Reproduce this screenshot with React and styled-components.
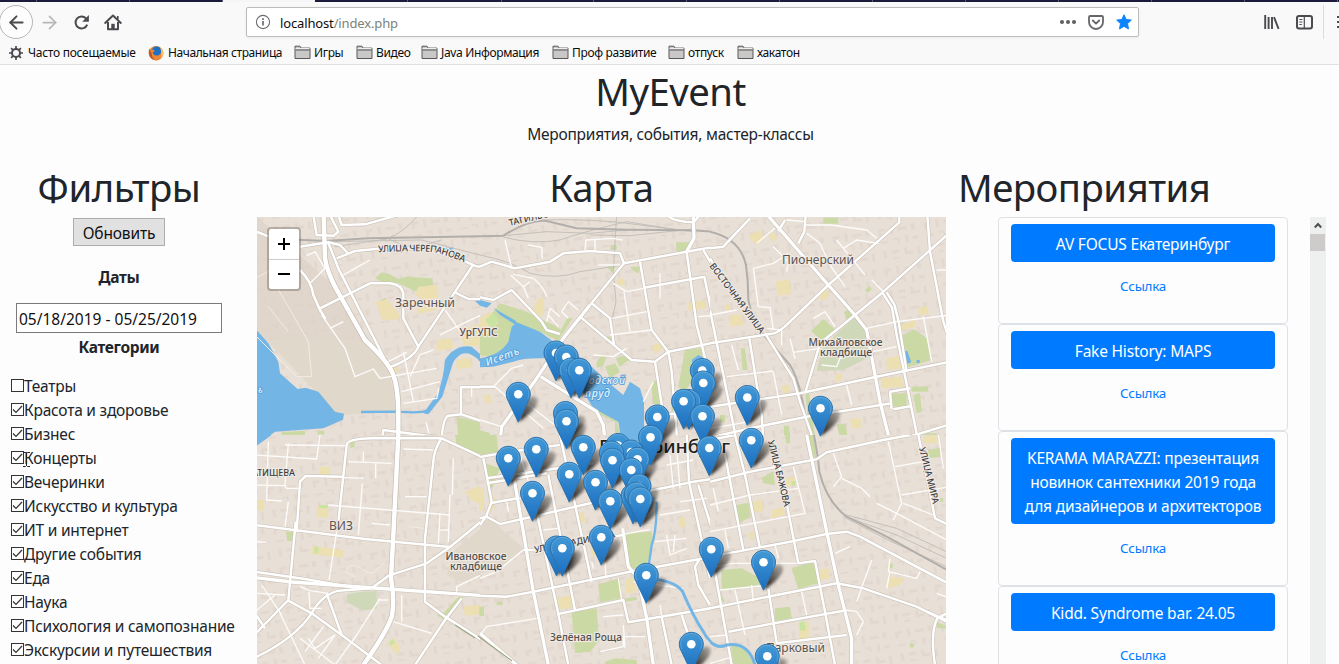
import React from "react";
import styled, { createGlobalStyle } from "styled-components";
import { ArrowLeft, ArrowRight } from "lucide-react";

const GlobalStyle = createGlobalStyle`
  *, *::before, *::after { box-sizing: border-box; }
  html, body { margin: 0; padding: 0; overflow: hidden; }
  body {
    background: #fdfdfe;
    color: #212529;
    font-family: "Noto Sans", "Open Sans", sans-serif;
    font-size: 15.5px;
    line-height: 24px;
    letter-spacing: -0.25px;
  }
  h1, h2, p { margin: 0; font-weight: 400; }
`;

const Screen = styled.div`
  width: 1339px;
  height: 664px;
  overflow: hidden;
  position: relative;
`;

/* ---------- browser chrome ---------- */

const Chrome = styled.header`
  height: 65px;
  background: #f9f9fa;
  border-bottom: 1px solid #e0e0e1;
  color: #0c0c0d;
`;

const TabStrip = styled.div`
  display: flex;
  height: 2px;
  background: #1d1b3c;
`;

const Tab = styled.div`
  flex: none;
  width: ${(p) => p.$w}px;
  background: ${(p) => (p.$active ? "#f5f6f7" : "transparent")};
  border-right: 1px solid ${(p) => (p.$active ? "#f5f6f7" : "#5b5a73")};
`;

const NavBar = styled.div`
  display: flex;
  align-items: center;
  height: 40px;
  color: #4a4a4f;
`;

const BackButton = styled.div`
  display: flex;
  align-items: center;
  justify-content: center;
  flex: none;
  width: 34px;
  height: 34px;
  margin-left: -1px;
  border: 1px solid #b5b5b7;
  border-radius: 50%;
  background: #fdfdfd;
`;

const NavIcon = styled.div`
  display: flex;
  flex: none;
  margin-left: ${(p) => p.$gap || 0}px;
  color: ${(p) => p.$color || "#4a4a4f"};
`;

const UrlBar = styled.div`
  display: flex;
  align-items: center;
  flex: none;
  width: 893px;
  height: 30px;
  margin-left: 124px;
  padding: 0 6px 0 8px;
  background: #fff;
  border: 1px solid #bcbcbd;
  border-radius: 2px;
  box-shadow: 0 1px 3px rgba(0, 0, 0, 0.06);
`;

const UrlText = styled.div`
  flex: 1;
  margin-left: 9px;
  padding-top: 1px;
  font-size: 13px;
  letter-spacing: -0.14px;
  color: #0c0c0d;
  span { color: #7b8378; }
`;

const Divider = styled.div`
  flex: none;
  width: 1px;
  height: 34px;
  margin-left: 10px;
  background: #dcdcdd;
`;

const Bookmarks = styled.nav`
  display: flex;
  align-items: center;
  height: 21px;
  padding-left: 8px;
  font-size: 12px;
  line-height: 20px;
`;

const Bookmark = styled.div`
  display: flex;
  align-items: center;
  flex: none;
  width: ${(p) => p.$w}px;
  gap: ${(p) => p.$gap || 3}px;
  white-space: nowrap;
  letter-spacing: ${(p) => p.$ls || -0.35}px;
  svg { flex: none; }
`;

/* ---------- page ---------- */

const Hero = styled.section`
  height: 96px;
  text-align: center;
  padding-left: 2px;
  p { padding-top: 1px; }
`;

const Title = styled.h1`
  height: 48px;
  padding-top: 2px;
  font-size: 38.3px;
  line-height: 48px;
  letter-spacing: -0.5px;
  text-align: ${(p) => p.$align || "center"};
  margin-bottom: 8px;
  white-space: nowrap;
`;

const Columns = styled.main`
  display: grid;
  grid-template-columns: 257px 701px 368px;
  height: 503px;
`;

const Column = styled.section`
  min-width: 0;
  height: 503px;
  padding-right: ${(p) => p.$gutter || 0}px;
`;

const Filters = styled.div`
  display: flex;
  flex-direction: column;
  align-items: center;
`;

const RefreshButton = styled.button`
  width: 92px;
  height: 28px;
  margin-top: 1px;
  padding: 2px 0 0;
  border: 1px solid #adadad;
  border-radius: 0;
  background: #e1e1e1;
  color: #111;
  font: inherit;
  line-height: 24px;
  letter-spacing: -0.15px;
`;

const GroupTitle = styled.div`
  margin-top: ${(p) => p.$top}px;
  font-weight: 700;
  letter-spacing: -0.35px;
`;

const DateInput = styled.input`
  width: 206px;
  height: 30px;
  margin-top: 14px;
  padding: 1px 1px 0 2px;
  border: 1px solid #7a7a7a;
  outline: 0;
  background: #fff;
  color: #111;
  font: inherit;
  letter-spacing: 0;
`;

const CheckList = styled.ul`
  align-self: stretch;
  list-style: none;
  margin: 15px 0 0;
  padding: 0 0 0 11px;
`;

const CheckRow = styled.li`
  display: flex;
  align-items: center;
  height: 24px;
  white-space: nowrap;
  letter-spacing: -0.22px;
`;

const Box = styled.span`
  display: block;
  flex: none;
  width: 13px;
  height: 13px;
  border: 1px solid #333;
  background: #fff;
  margin-top: -1px;
  svg { display: block; }
`;

const MapFrame = styled.div`
  position: relative;
  width: 689px;
  height: 447px;
  overflow: hidden;
  background: #e8dfd7;
`;

const ZoomControl = styled.div`
  position: absolute;
  left: 10px;
  top: 10px;
  width: 34px;
  height: 64px;
  border: 2px solid rgba(0, 0, 0, 0.22);
  border-radius: 4px;
  background: #fff;
  background-clip: padding-box;
`;

const ZoomButton = styled.div`
  display: flex;
  align-items: center;
  justify-content: center;
  height: 30px;
  color: #000;
  & + & { border-top: 1px solid #ccc; }
`;

const ListArea = styled.div`
  display: flex;
  justify-content: flex-end;
  height: 447px;
`;

const Cards = styled.div`
  width: 290px;
  margin-right: 22px;
`;

const Card = styled.article`
  padding: 6px 12px;
  height: ${(p) => p.$h}px;
  border: 1px solid #dee2e6;
  border-radius: 4px;
  text-align: center;
`;

const EventButton = styled.div`
  padding: 8px 0 6px;
  border-radius: 4px;
  background: #007bff;
  color: #fff;
  white-space: pre-line;
  letter-spacing: -0.2px;
`;

const EventLink = styled.a`
  display: block;
  margin-top: 12px;
  font-size: 13.4px;
  color: #007bff;
  letter-spacing: -0.25px;
`;

const Scrollbar = styled.div`
  width: 16px;
  background: #eef0f0;
`;

const ScrollArrow = styled.div`
  display: flex;
  align-items: center;
  justify-content: center;
  width: 15px;
  height: 17px;
`;

const ScrollThumb = styled.div`
  width: 15px;
  height: 17px;
  background: #cdcccb;
`;

const Caret = styled.svg`
  position: absolute;
  left: 22px;
  top: 451px;
`;

/* ---------- icons ---------- */

const Folder = () => (
  <svg width="17" height="15" viewBox="0 0 17 15">
    <path d="M1 13.5V1.2h5l1.2 1.9h8.8v10.4z" fill="#c9c8c7" stroke="#58585a" strokeLinejoin="round" />
    <path d="M1.5 5h14" stroke="#58585a" />
    <path d="M1.5 3.5h14" stroke="#eee" />
  </svg>
);

const Gear = () => (
  <svg width="16" height="16" viewBox="0 0 16 16" fill="none" stroke="#4a4a4f">
    <circle cx="8" cy="8" r="4" strokeWidth="2" />
    <path
      d="M8 1v3M8 12v3M1 8h3M12 8h3M3.1 3.1l2 2M10.9 10.9l2 2M3.1 12.9l2-2M10.9 5.1l2-2"
      strokeWidth="1.7"
    />
  </svg>
);

const Firefox = () => (
  <svg width="16" height="16" viewBox="0 0 16 16">
    <circle cx="8" cy="8.2" r="7.2" fill="#e2882f" />
    <circle cx="8.6" cy="6.6" r="5" fill="#1f6fc4" />
    <path d="M1.2 3.4L3.3 5 5.5 4.6 6.8 6 4.7 7.6Q5.5 10.8 9 10.6 12.4 10.2 13.4 6.5L12.4 2.8Q15.6 5 15.3 9 14.4 14.8 8.4 15.4 2 15 .8 9 .4 5.5 1.2 3.4z" fill="#e9873a" />
    <path d="M1.2 4.5Q-.2 12 6.5 15.2 3.5 12 3.6 8z" fill="#b5562d" />
    <path d="M12.4 2.8Q15.6 5 15.3 9 14.8 12 12.6 13.7 14 9 12.4 2.8z" fill="#f6c36b" />
  </svg>
);

const Reload = () => (
  <svg width="17" height="17" viewBox="0 0 17 17" fill="none" stroke="currentColor">
    <path d="M14.2 10.6A6 6 0 1 1 13 4.4l1.4 1.5" strokeWidth="2" />
    <path d="M15.9 1v6.8H9.2z" fill="currentColor" stroke="none" />
  </svg>
);

const Home = () => (
  <svg width="18" height="17" viewBox="0 0 18 17" fill="none" stroke="currentColor">
    <path d="M1.2 8.9L9 1.6l7.8 7.3" strokeWidth="2" strokeLinecap="round" strokeLinejoin="round" />
    <path d="M4 8v7.3h10V8" strokeWidth="2" strokeLinejoin="round" />
    <path d="M7.3 15V9.8h3.4V15z" fill="currentColor" stroke="none" />
    <path d="M13.8 2v3" strokeWidth="1.6" />
  </svg>
);

const Info = () => (
  <svg width="16" height="16" viewBox="0 0 16 16" fill="none" stroke="#6b6b70">
    <circle cx="8" cy="8" r="6.6" strokeWidth="1.1" />
    <path d="M8 7v4.6M8 4.2v1.7" strokeWidth="1.7" />
  </svg>
);

const Dots = () => (
  <svg width="16" height="6" viewBox="0 0 16 6" fill="#5f5f63">
    <circle cx="2" cy="3" r="2" />
    <circle cx="8" cy="3" r="2" />
    <circle cx="14" cy="3" r="2" />
  </svg>
);

const Pocket = () => (
  <svg width="16" height="15" viewBox="0 0 16 15" fill="none" stroke="#66666a" strokeWidth="1.8" strokeLinecap="round" strokeLinejoin="round">
    <path d="M2.2 1h11.6q1.2 0 1.2 1.2V7a7 7 0 0 1-14 0V2.2Q1 1 2.2 1z" />
    <path d="M4.8 5.5L8 8.6l3.2-3.1" />
  </svg>
);

const Star = () => (
  <svg width="16" height="16" viewBox="0 0 16 16">
    <path d="M8 .8l2.2 4.7 5.1.6-3.8 3.5 1 5.3L8 12.3l-4.5 2.6 1-5.3L.7 6.1l5.1-.6z" fill="#0a84ff" stroke="#0a84ff" strokeLinejoin="round" />
  </svg>
);

const Library = () => (
  <svg width="16" height="15" viewBox="0 0 16 15" stroke="currentColor" fill="none">
    <path d="M1.2 0v14M4.6 2v12M8 2v12" strokeWidth="1.9" />
    <path d="M10 2.2l4.6 11.6" strokeWidth="1.9" />
  </svg>
);

const Sidebar = () => (
  <svg width="17" height="15" viewBox="0 0 17 15" stroke="currentColor" fill="none">
    <rect x="1" y="1" width="15" height="12.6" rx="2" strokeWidth="2" />
    <path d="M8.3 1.5v12" strokeWidth="1.2" />
    <path d="M3.4 4.5h3M3.4 7h3M3.4 9.5h2.4" />
  </svg>
);

const Menu = () => (
  <svg width="16" height="14" viewBox="0 0 16 14" stroke="currentColor" strokeWidth="2">
    <path d="M0 2h14M0 7h14M0 12h14" />
  </svg>
);

/* ---------- map data ---------- */

// The map is stored as six tiles; every tile has an origin and draws at triple resolution.
const TILES = [
  {
    id: "a", x: 255, y: 215, w: 675, h: 660,
    tint: ["M0 0L240 215 330 375 0 375z"],
    tint2: ["M0 375L330 375 400 450 425 590 250 600 0 340z"],
    green: ["M360 190L380 172 405 178 430 192 455 185 532 190 535 208 480 228 430 205 380 200z", "M370 260l20-12 6 8-22 12z", "M605 605L675 622 720 620 720 675 610 675z", "M690 310l20-30 10 0 0 145-20-20 10-30-8-40z", "M80 652l70-5 0 12-70 4z", "M188 648h20v10h-20z"],
    sand: ["M362 262l35-10 40 50-10 12-45 0z", "M490 215l55-5 5 35-30 15-40-20z", "M485 265l55-8 10 25-60 15z", "M545 375l45-5 5 30-50 8z", "M615 345l65-20 30 50-20 20-65-5z", "M605 435l40-8 5 30-45 5z", "M695 545l18-6 0 30-15 3z", "M410 450l20 8 0 15-18-2z"],
    water: ["M0 340L40 385 70 440 75 475 128 522 152 518 190 530 240 590 267 596 264 614 205 640 60 650 20 680 0 680z", "M545 540Q565 500 570 435Q600 388 650 395L690 430 720 435 720 458Q690 460 668 432Q640 408 618 418Q598 430 592 450L562 545 520 598 505 595z", "M658 256l30 0 20 8-4 12-25 0z", "M700 285l20-12v25z", "M563 98l32 0-5 8-24 0z"],
    stream: ["M318 591L430 590Q500 596 520 585L550 545"],
    xl: ["M206 0L210 130Q215 165 240 215L330 375Q400 440 415 480Q430 520 430 600L430 680"],
    m: ["M220 85Q235 120 250 160L398 450", "M195 280L345 205 405 205Q440 210 445 235L445 310 490 395", "M408 455Q475 430 490 395L655 148", "M600 232L640 252 720 252", "M245 130L300 108Q440 92 520 105Q600 125 655 150Q685 165 720 140", "M135 95L220 82 255 90 282 118", "M175 0L185 60 235 62 250 50 225 0", "M250 0L260 30 330 28 430 0", "M0 48L40 64", "M135 165Q170 200 175 240L195 285 212 312", "M380 680L385 645 560 668Q565 608 580 602L620 598 720 632", "M618 600L618 517 720 517"],
    s: ["M200 300L270 400 300 485 355 462 375 490 545 460", "M400 440L455 412", "M440 530L555 500", "M445 565L545 550 552 520", "M445 410L475 560", "M465 485L495 420 535 405", "M555 360L625 325 700 290 715 270", "M570 285L620 355", "M225 340L265 320", "M155 122L180 110 210 160 165 205", "M0 665L80 668 360 672", "M650 520L650 545M678 520L678 560 720 600", "M265 180L300 160 345 135", "M513 622L522 655"],
    faint: ["M45 180L160 380 170 485 125 485 0 360", "M40 275L100 350", "M0 190L60 160"],
    rail: ["M130 74L210 78 340 70 675 64"],
    rail2: ["M240 95L395 72Q450 50 490 0", "M220 80L500 75 675 120", "M400 72L470 100 560 75"],
  },
  {
    id: "b", x: 480, y: 215, w: 690, h: 660,
    green: ["M40 290L60 265 140 290 230 335 250 350 235 378 180 350 105 330 85 390 50 430 0 420 0 330z", "M588 82h42l-5 30h-35z", "M335 565L410 612 416 625 340 590z", "M405 610l15 40 0 10-15-5z", "M615 405L665 400 665 440 640 490 615 530 595 515z", "M515 500l20-5 8 80-25-10z", "M240 350L262 308 278 308 250 355z", "M0 645l30 10-10 25-20 0z", "M350 440l15-22 15 5-10 30-20 5z", "M375 455l30-10 15 25-30 20z", "M408 430l30-10 10 15-30 20z", "M392 90h18v15h-18z", "M452 155l25 0-2 22-20-15z", "M380 155l25 0-8 18z", "M378 365h20v15h-20z", "M575 560h20v30h-20z"],
    sand: ["M175 250l15 0 3 45-18 15-20-20z", "M625 262l50-5 5 22-55 8z", "M410 195l20-5 5 18-20 5z", "M515 395l20-12 15 15-25 20z", "M10 540l20 0 8 20-20 5z", "M0 310l30-20 25 30-25 40-30-5z"],
    greenTop: ["M15 315l25-20 15 20-18 30z"],
    water: ["M0 430Q60 420 85 380L95 335 110 322 180 350 240 395 250 420 200 430Q130 428 100 440L40 455 0 457z", "M250 395L320 440 370 490 430 540 450 500 480 520 492 560 492 680 425 680 415 620 340 580 315 540 240 450z", "M0 255L35 265 20 278 0 272z", "M635 435l20-15 20 10 5 40-35 0z", "M40 278L60 290 108 318 108 330 60 300z"],
    l: ["M330 270L250 370 160 505 65 635 60 680", "M640 0L642 70 620 110", "M182 485L350 590 370 630 375 680"],
    m: ["M432 145L330 270", "M0 155L35 140 105 160 210 140 250 115 330 108 420 115 432 145 620 110 720 92", "M480 140L515 345 565 410 575 470 592 680", "M620 110L650 330 668 400 680 450", "M492 218L673 185 720 410", "M300 305L455 435 525 440 565 410 720 380", "M335 265L390 310 402 390", "M0 247L40 255 95 225 185 320 200 345 240 357", "M525 440L550 600", "M550 600L720 580", "M670 105L720 192", "M0 515L45 515", "M560 0Q580 20 640 22L660 0"],
    s: ["M45 515L190 640", "M140 565L250 650", "M0 615L65 635", "M400 205L440 230 490 220", "M395 310L500 290", "M390 360L515 345", "M432 230L450 350", "M540 175L540 250", "M75 75L95 160", "M145 90L185 97 187 130", "M92 180L130 215 150 200M130 215L145 250M100 178L160 190Q190 215 200 245", "M200 320L210 280 240 305M205 300L235 335", "M245 290L265 260 295 285M245 290L265 310", "M40 515L95 460 130 450", "M340 420L400 425 440 400", "M490 560L520 500", "M655 305L720 300", "M315 105L318 75 400 70 428 75 M345 75L345 105", "M355 150L420 150"],
    rail: ["M0 64L70 62Q150 12 200 18L290 40 440 44 640 46 720 52"],
    rail2: ["M70 62L200 50 330 55 440 45", "M180 15Q350 10 480 30L640 50", "M330 60L450 62 640 42", "M0 120Q100 140 150 175Q230 195 300 170L430 150", "M70 66Q160 90 240 75Q310 50 440 20L600 46", "M410 0L400 170 408 260 395 320"],
  },
  {
    id: "c", x: 710, y: 215, w: 720, h: 660,
    green: ["M303 348L340 313 378 345 335 377z", "M92 400l13 0 8 65-15 0z", "M222 632h15l5 48h-20z", "M285 530l12 0 20 145-15 0z", "M545 535h45v40h-45z", "M605 515h50v15h-50z", "M380 628l28 0 5 50-20 0z", "M402 290l25-12 0 25-15 15z", "M340 8h45v18h-45z", "M465 225l15-12 5 10-12 10z", "M570 365L612 343 650 370 665 435 585 460z", "M610 540l20-5 5 55-15 5z", "M230 205l12 0 0 22-12 0z", "M30 600h15v20h-15z", "M630 655h50v20h-50z", "M565 325l20 0 0 20-15 2z"],
    green2: ["M435 305L468 345 480 425 400 465 320 468 340 395z"],
    sand: ["M115 65l30-20 20 25-25 20z", "M175 60l15-8 12 18-15 12z", "M198 200l40-8 5 45-40 5z", "M60 300l35 0 5 30-40 5z", "M325 240l20-20 15 20-25 20z", "M530 430l40-8 5 38-45 5z", "M570 330l45-14 0 20-40 10z", "M515 490l60-5 5 30-65 5z", "M625 280l25-8 8 22-30 8z", "M375 480l18-5 5 20-18 5z", "M215 515l20-8 5 22-20 8z", "M420 615l30-8 8 30-30 5z", "M45 270l12-5 5 20-12 2z"],
    water: ["M583 408l9 0 12 34-12 4z", "M620 435h9v9h-9z"],
    l: ["M172 0L355 210 435 300 470 345 510 560 540 680"],
    m: ["M568 0L568 22 355 210 240 320Q200 360 180 357L0 385", "M720 52L520 230 435 300 330 385 285 535", "M652 0L660 110 700 320 720 380", "M518 234L546 278 560 360 625 680", "M530 232L553 268 566 320 590 470", "M0 575L270 535 500 485 720 440", "M0 668L120 640 290 605 545 565", "M550 680L720 628", "M545 583L540 530 600 520M550 583L605 573", "M118 370L155 600 160 680", "M0 285L40 480 80 680", "M165 355L250 490 270 560 312 680", "M0 100L40 95 120 10", "M287 0L283 50 265 85M205 48L225 15", "M0 130L28 175"],
    s: ["M130 160L190 145 235 115M145 275L130 160M145 275L180 278 190 345", "M240 370L255 430M250 412L330 400", "M470 340L560 320 720 300", "M490 410L560 395", "M640 305L665 440", "M190 470L215 600", "M50 485L190 468", "M0 300L80 285", "M410 510L425 570", "M230 15L285 20", "M290 55L330 85 360 150 405 215", "M380 75L465 180", "M310 310L345 290 375 335", "M485 195L520 230", "M140 85L195 40", "M680 165L720 165", "M285 30L365 30 470 45 500 70", "M400 100L440 75 505 85", "M190 95L235 140 230 170", "M65 390L85 465", "M170 340L215 345 215 390", "M335 450L380 455 390 430 440 415", "M0 640L120 620"],
    rail: ["M0 50Q90 70 108 150Q115 200 115 255Q125 310 165 365L240 450Q270 500 285 600L310 680"],
  },
  {
    id: "d", x: 255, y: 435, w: 675, h: 700,
    green: ["M600 0L720 0 720 55 680 68 640 45 605 28z", "M93 290h24v28h-20z", "M545 540l20-5 45-50 15 0-50 75z", "M690 70l30 0 0 110-18-20z", "M284 20l15 0 0 15-12 5z"],
    green2: ["M275 478L320 470 365 468 365 520 325 527 275 502z"],
    sand: ["M630 170l50-20 30 40-10 30-50-25z", "M185 215h35v32h-35z", "M170 332l95 14 0 22-95-10z", "M0 195h28v32h-28z", "M195 95h30v25h-30z", "M625 515l60-8 5 30-60 5z", "M397 625l20-18 20 30-10 22z", "M670 215l30-5 5 30-20 10z"],
    greenTop: ["M192 210h26v10h-26z", "M178 335h12v20h-12z", "M672 515h15v28h-15z", "M402 620l12-8 5 12-14 8z"],
    tint2: ["M600 345L700 262 720 270 720 405 620 440 575 420z"],
    water: ["M0 0L50 0 5 32 0 34z"],
    xl: ["M430 0L415 300 408 430Q420 500 410 545Q395 590 325 690"],
    l: ["M0 428L110 441 400 462 720 484"],
    m: ["M0 410L150 432 300 458", "M0 270L330 312 585 336", "M125 290L135 140 152 123 265 125", "M122 260L100 495 0 598", "M248 280L275 30Q275 12 350 10L560 10 680 66 720 58", "M560 8Q535 50 535 80L510 310 510 500 570 545 720 640", "M680 66L705 200 690 250 585 336 515 385 400 422 350 460 250 467Q200 480 170 535Q120 610 0 668", "M100 497L170 535 260 600 380 690", "M215 475L260 600", "M480 690L570 555 620 490", "M690 220L720 265", "M695 130L720 125M695 148L720 143", "M0 535L30 580"],
    s: ["M220 210L585 240", "M265 128L325 130", "M0 150L90 152 95 160 130 160", "M40 20L35 195 80 198", "M0 60L185 72 195 0", "M100 25L90 150", "M245 290L222 435", "M322 145L310 300", "M90 30L270 32", "M280 80L410 85", "M325 50L325 80M362 85L362 130", "M445 42L535 45", "M450 185L515 185", "M555 235L550 325", "M585 180L580 320", "M595 70L592 180", "M350 265L405 270", "M550 285L582 285", "M605 470L605 455 720 400", "M0 320L35 322", "M100 200L90 275", "M415 560L530 595", "M375 490L305 600 240 690", "M135 610L240 690", "M205 575L150 650", "M240 600L190 670", "M75 535L150 690", "M20 450L80 540", "M0 475L90 480", "M0 530L60 480", "M160 610L180 640 240 600", "M135 455L165 467 220 475", "M370 495L400 495", "M440 480L440 560", "M720 572L695 580 682 600", "M162 470L165 520 200 520"],
    faint: ["M270 410Q280 380 320 400Q350 430 370 400L385 385", "M270 410L300 425", "M460 275L510 280"],
  },
  {
    id: "e", x: 480, y: 435, w: 690, h: 700,
    green: ["M430 295L515 290 520 320 500 390 460 402 440 380z", "M275 530L350 520 357 618 330 650 285 655z", "M355 448L420 430 425 490 360 502z", "M0 0L50 0 55 50 0 60z", "M15 85L60 100 25 190z", "M375 680l30-10 65 5 0 20-95 0z", "M50 500h18v10h-18z", "M0 515h12v28h-12z", "M435 490l35-5 0 10-35 5z"],
    sand: ["M232 490l45-12 0 40-40 5z", "M435 435l25-8 8 45-30 5z", "M290 235l20-5 8 30-25 5z", "M595 250l18-5 5 30-20 2z", "M330 335l20-5 8 30-20 5z", "M0 160l12 0 0 60-12 10z", "M30 180l20 10-15 40-15 0z"],
    tint2: ["M0 262L30 252 130 340 60 400 0 415z"],
    water: ["M430 0L492 0 480 70 440 60z"],
    stream: ["M530 200Q530 290 515 330L505 400"],
    l: ["M90 60L130 290 160 470 205 690", "M428 280L445 395 475 430 500 550 520 690", "M0 595L110 690"],
    m: ["M0 66L90 50 240 30", "M0 250L20 245 60 267 330 205 640 140 720 128", "M20 130L340 85", "M20 145L200 115", "M30 205L110 190", "M0 482L80 485 160 470 450 410 660 372 720 365", "M235 537L430 495 445 562 720 515", "M205 120L285 525", "M240 0L335 440", "M160 185L235 537 265 690", "M620 0L627 140 690 430", "M655 150L720 360", "M660 370L645 395 655 450 690 510", "M130 345L170 345M280 320L430 300", "M545 545L575 690", "M605 540L625 600", "M10 70L35 200 20 240 0 270"],
    s: ["M0 430L50 410 130 345", "M0 600L20 575 170 550", "M370 545L430 540", "M360 650L430 635 430 605 495 605", "M430 570L435 640", "M60 200L150 185", "M80 200L85 230", "M525 320L620 310", "M560 300L570 360 620 340", "M540 510L545 540", "M190 285L235 280", "M335 380L340 400", "M590 40L600 160M560 90L640 75M570 60L580 160M600 200L680 190M540 240L630 225", "M375 380L378 430", "M430 298L510 283", "M585 300L580 350", "M415 430L425 495", "M460 440L610 460", "M120 60L160 185"],
    river: ["M500 430Q580 435 607 468Q640 545 670 590Q680 612 700 625"],
  },
  {
    id: "f", x: 710, y: 435, w: 720, h: 700,
    green: ["M35 405L95 400 150 430 150 450 35 467z", "M245 400L310 380 325 445 265 462z", "M195 520L240 515 245 550 195 558z", "M155 130L190 108 195 150 160 145z", "M80 210L115 203 122 245 85 265z", "M62 625L105 645 135 690 70 690z", "M650 45L690 38 692 65 655 70z", "M295 0l15 0 10 70-15-5z", "M540 385h8v15h-8z", "M600 625h12v12h-12z", "M225 0h15v25h-12z", "M30 470l15 30-8 0z", "M680 560l40 20-38 0z", "M675 190h25v10h-25z"],
    sand: ["M130 200l25-8 5 35-30 8z", "M185 225l35-10 5 25-40 10z", "M325 405l30-5 5 30-30 5z", "M535 425l50 5-15 20-35 10z", "M265 565l30-8 5 50-30 8z", "M225 130l30-5 0 25-30 8z", "M640 5l40-5 0 25-38 0z", "M115 295l18-4 0 20-15 4z"],
    greenTop: ["M268 562l15-4 4 28-16 2z", "M245 138h12v14h-12z"],
    l: ["M290 0L350 290 385 450 425 610 425 690"],
    m: ["M0 140L120 110 320 73 350 52 520 15 600 0", "M75 0L105 120 150 340", "M45 60L100 345", "M0 365L240 320 350 297 410 290 450 305 720 448", "M0 520L200 480 380 445 460 460 620 515 720 565", "M15 410L65 690", "M175 460L210 690", "M200 50L265 385 315 378 345 530 375 690", "M55 590L400 527", "M200 625L410 600", "M625 0L675 250 720 272", "M720 530L682 550Q660 590 675 690", "M650 530L720 560", "M0 15L75 0"],
    s: ["M580 205L670 240", "M535 20L575 205 550 255", "M555 95L640 80", "M575 180L720 155", "M370 55L395 125 370 155", "M395 130L455 160 480 185 M500 205L560 235 720 320", "M0 210L120 180 265 160", "M250 95L285 235 0 290", "M45 285L55 340", "M0 400L65 385 260 385", "M30 465L180 450", "M75 465L105 600", "M125 450L130 500", "M275 470L290 540", "M485 375L440 500", "M540 370L535 410 620 430 630 410", "M540 410L530 460", "M405 525L440 530 460 560 440 600", "M375 355L420 335", "M195 330L205 370", "M685 0L700 100", "M0 605L50 600", "M0 685L60 668", "M680 475L720 490", "M10 160L25 230"],
    rail: ["M312 0Q325 70 328 110Q350 200 410 245L530 305 720 410"],
    rail2: ["M410 240L560 280 720 355", "M420 250L560 300 720 375", "M400 245L540 318 720 400"],
    river: ["M-10 606Q15 645 50 630Q115 620 135 690"],
  },
];

const PINS = [
  [556, 353], [566.3, 357], [571, 370], [579.3, 370.3], [702.3, 370.5], [703.3, 383], [518.3, 394.3],
  [747.3, 397.5], [689, 401.5], [683.6, 401.3], [820.5, 408.3], [565.5, 413.5], [702.5, 416.3],
  [657.3, 417], [566.5, 421.3], [650.5, 437.3], [751.3, 440.3], [618, 445.5], [583.3, 447.3],
  [709.3, 448], [536.3, 449.3], [631, 452], [611.5, 453], [508.3, 458.3], [637.5, 459.3], [612.5, 460.3],
  [631.3, 470], [569.3, 474.3], [595.5, 482.3], [639, 486], [532.5, 493.3], [633, 496], [636.5, 494],
  [640.3, 499], [610.3, 501.3], [601.3, 537.3], [556.5, 548], [562.3, 548.3], [711.3, 549.3],
  [763.5, 562.3], [646.3, 575.3], [691.3, 644.3], [767.3, 656.3],
];

const CityMap = () => {
  const layer = (key, props) =>
    TILES.map((t) => (
      <g key={t.id} clipPath={`url(#tile-${t.id})`}>
        <g transform={`translate(${t.x} ${t.y}) scale(.33333)`} {...props}>
          {(t[key] || []).map((d) => <path key={d} d={d} />)}
        </g>
      </g>
    ));
  const line = (stroke, strokeWidth) => ({ fill: "none", stroke, strokeWidth, strokeLinejoin: "round", strokeLinecap: "butt" });
  return (
    <svg width="689" height="447" viewBox="257 217 689 447" fontFamily="'Noto Sans', sans-serif" letterSpacing="0">
      <defs>
        {TILES.map((t) => (
          <clipPath id={`tile-${t.id}`} key={t.id}>
            <rect x={t.x} y={t.y} width={t.w / 3} height={t.h / 3} />
          </clipPath>
        ))}
        <pattern id="blocks" width="46" height="40" patternUnits="userSpaceOnUse" patternTransform="rotate(-9)">
          <path
            d="M3 4h7v3h-4v4h-3zM15 3h3v8h-3zM23 5h9v3h-9zM36 3h4v6h-4zM4 17h8v2h-8zM17 15h6v5h-2v-3h-4zM29 14h3v7h-3zM36 16h6v3h-6zM5 26h3v8h-3zM13 27h8v3h-8zM14 34h6v2h-6zM26 26h3v4h6v3h-9zM39 27h3v8h-3z"
            fill="#dfd3c8"
          />
        </pattern>
        <linearGradient id="pin" x1="0" y1="0" x2="0" y2="1">
          <stop offset="0" stopColor="#4399d6" />
          <stop offset="1" stopColor="#1b6ec0" />
        </linearGradient>
        <linearGradient id="shade" x1="0" y1="1" x2="1" y2="0">
          <stop offset="0" stopColor="#000" stopOpacity=".95" />
          <stop offset="1" stopColor="#000" stopOpacity=".2" />
        </linearGradient>
        <filter id="blur" x="-50%" y="-50%" width="200%" height="200%">
          <feGaussianBlur stdDeviation="1.8" />
        </filter>
        <path id="cherepanova" d="M378 252.300Q420 250 435 252.500Q450 256 468 264" />
        <path id="vostochnaya" d="M709 266L763 338" />
        <path id="bazhova" d="M768 441L785 510" />
        <path id="mira" d="M919 448L934 508" />
        <path id="tagil" d="M510 226Q530 221 575 211" />
        <path id="radishcheva" d="M535 553L640 532.500" />
        <path id="iset" d="M487 366L522 353" />
      </defs>
      <rect x="257" y="217" width="689" height="447" fill="#e8dfd7" />
      {layer("tint", { fill: "#e0d6cb" })}
      <rect x="257" y="217" width="689" height="447" fill="url(#blocks)" opacity=".55" />
      {layer("tint2", { fill: "#e0d8ca" })}
      {layer("green", { fill: "#cbd9a4" })}
      {layer("green2", { fill: "#cfd8b8" })}
      {layer("sand", { fill: "#ecdfb2" })}
      {layer("greenTop", { fill: "#c9e3a1" })}
      {layer("water", { fill: "#73b6e6" })}
      {layer("stream", line("#73b6e6", 7))}
      {layer("faint", line("#f2ece6", 3))}
      {layer("rail2", line("#bdb9b4", 2.5))}
      {layer("rail", line("#b2afab", 6))}
      {layer("m", line("#c9c1b7", 11))}
      {layer("l", line("#c9c1b7", 13.5))}
      {layer("xl", line("#c4bbb0", 17.5))}
      {layer("s", line("#fdfcfb", 4))}
      {layer("m", line("#fff", 7.5))}
      {layer("l", line("#fff", 10))}
      {layer("xl", line("#fff", 13.5))}
      {layer("river", line("#73b6e6", 9))}
      <path d="M455 625L475 638M478 636L512 661" stroke="#9fa886" strokeWidth="1.300" fill="none" />

      <g fill="#454545" stroke="#f0e9e3" strokeWidth="2.400" paintOrder="stroke" strokeLinejoin="round">
        <g fontSize="9.200" fontWeight="500" fill="#3f3f3f">
          <text><textPath href="#cherepanova" textLength="88">УЛИЦА ЧЕРЕПАНОВА</textPath></text>
          <text><textPath href="#vostochnaya" textLength="85">ВОСТОЧНАЯ УЛИЦА</textPath></text>
          <text><textPath href="#bazhova" textLength="68">УЛИЦА БАЖОВА</textPath></text>
          <text><textPath href="#mira" textLength="58">УЛИЦА МИРА</textPath></text>
          <text><textPath href="#tagil" textLength="58">ТАГИЛЬСКАЯ</textPath></text>
          <text><textPath href="#radishcheva" textLength="82">УЛИЦА РАДИЩЕВА</textPath></text>
          <text x="252" y="475.500" textLength="43">АТИЩЕВА</text>
        </g>
        <g fontSize="12" fill="#5c5550">
          <text x="395" y="307" textLength="60" lengthAdjust="spacingAndGlyphs">Заречный</text>
          <text x="782" y="263.500" textLength="72" lengthAdjust="spacingAndGlyphs">Пионерский</text>
          <text x="329" y="529.500" textLength="24" lengthAdjust="spacingAndGlyphs">ВИЗ</text>
          <text x="766" y="651.500" textLength="59" lengthAdjust="spacingAndGlyphs">Парковый</text>
        </g>
        <g fontSize="10" fontWeight="500" fill="#54504c">
          <text x="459.500" y="336" fontSize="10.500" textLength="38" lengthAdjust="spacingAndGlyphs">УрГУПС</text>
          <text x="808.500" y="345.500" textLength="74" lengthAdjust="spacingAndGlyphs">Михайловское</text>
          <text x="820" y="355.500" textLength="52" lengthAdjust="spacingAndGlyphs">кладбище</text>
          <text x="445.500" y="560" textLength="61" lengthAdjust="spacingAndGlyphs">Ивановское</text>
          <text x="450" y="570" textLength="52" lengthAdjust="spacingAndGlyphs">кладбище</text>
          <text x="550" y="641" textLength="72" lengthAdjust="spacingAndGlyphs">Зелёная Роща</text>
        </g>
        <text x="599" y="453" fontSize="18" fontWeight="500" fill="#222" textLength="131" lengthAdjust="spacingAndGlyphs">Екатеринбург</text>
      </g>
      <g fontSize="10.500" fontStyle="italic" fontWeight="500" fill="#e6f3fc" stroke="#4d9bd8" strokeWidth="1.500" paintOrder="stroke">
        <text><textPath href="#iset" textLength="35">Исеть</textPath></text>
        <text x="571" y="383.500" textLength="54">Городской</text>
        <text x="585" y="396.500" textLength="25">пруд</text>
        <text x="257" y="392" fontSize="9" transform="rotate(15 257 392)">ъ</text>
      </g>

      <g fill="url(#shade)" filter="url(#blur)">
        {PINS.map(([x, y]) => (
          <path key={`${x}-${y}`} d={`M${x} ${y + 28}l3-9Q${x + 8} ${y + 3} ${x + 15} ${y + 2}Q${x + 23} ${y + 3} ${x + 17} ${y + 13}Q${x + 12} ${y + 20} ${x} ${y + 28}z`} />
        ))}
      </g>
      {PINS.map(([x, y]) => (
        <g key={`${x}-${y}`} transform={`translate(${x - 12.5} ${y - 12.5})`}>
          <path
            d="M12.500.5C5.900.500.500 5.900.500 12.500c0 2.700 1 5 2.300 7.400L12.500 40.300l9.700-20.400c1.300-2.400 2.300-4.700 2.300-7.400C24.500 5.900 19.100.500 12.500.500z"
            fill="url(#pin)" stroke="#2c72ab"
          />
          <path d="M3 17.500C-.500 9 4.500 1.600 12.500 1.600S25.500 9 22 17.500" fill="none" stroke="#7ab8e2" strokeOpacity=".5" />
          <circle cx="12.500" cy="12.500" r="4.300" fill="#fff" />
        </g>
      ))}
    </svg>
  );
};

/* ---------- content ---------- */

const CATEGORIES = [
  ["Театры", false], ["Красота и здоровье", true], ["Бизнес", true], ["Концерты", true],
  ["Вечеринки", true], ["Искусство и культура", true], ["ИТ и интернет", true],
  ["Другие события", true], ["Еда", true], ["Наука", true],
  ["Психология и самопознание", true], ["Экскурсии и путешествия", true],
];

const EVENTS = [
  ["AV FOCUS Екатеринбург", 107],
  ["Fake History: MAPS", 107],
  ["KERAMA MARAZZI: презентация\nновинок сантехники 2019 года\nдля дизайнеров и архитекторов", 155],
  ["Kidd. Syndrome bar. 24.05", 107],
];

const BOOKMARKS = [
  [<Gear />, "Часто посещаемые", 140, -0.28, 4],
  [<Firefox />, "Начальная страница", 146, -0.4, 4],
  [<Folder />, "Игры", 62],
  [<Folder />, "Видео", 65],
  [<Folder />, "Java Информация", 131],
  [<Folder />, "Проф развитие", 116, -0.35],
  [<Folder />, "отпуск", 69],
  [<Folder />, "хакатон", 80],
];

const TABS = [37, 93, 93, 92, 93, 94, 92, 93, 93, 93, 93, 93, 93, 93, 93];

export default function App() {
  return (
    <Screen>
      <GlobalStyle />
      <Chrome>
        <TabStrip>
          {TABS.map((w, i) => <Tab key={i} $w={w} $active={i === 3} />)}
        </TabStrip>
        <NavBar>
          <BackButton><ArrowLeft size={21} strokeWidth={2.2} /></BackButton>
          <NavIcon $gap={6} $color="#b8b8ba"><ArrowRight size={21} strokeWidth={2} /></NavIcon>
          <NavIcon $gap={13}><Reload /></NavIcon>
          <NavIcon $gap={14}><Home /></NavIcon>
          <UrlBar>
            <Info />
            <UrlText>localhost<span>/index.php</span></UrlText>
            <Dots />
            <NavIcon $gap={12}><Pocket /></NavIcon>
            <NavIcon $gap={12}><Star /></NavIcon>
          </UrlBar>
          <NavIcon $gap={125}><Library /></NavIcon>
          <NavIcon $gap={16}><Sidebar /></NavIcon>
          <Divider />
          <NavIcon $gap={13}><Menu /></NavIcon>
        </NavBar>
        <Bookmarks>
          {BOOKMARKS.map(([icon, label, w, ls, gap]) => (
            <Bookmark key={label} $w={w} $ls={ls} $gap={gap}>{icon}{label}</Bookmark>
          ))}
        </Bookmarks>
      </Chrome>

      <Hero>
        <Title>MyEvent</Title>
        <p>Мероприятия, события, мастер-классы</p>
      </Hero>

      <Columns>
        <Column $gutter={19}>
          <Title>Фильтры</Title>
          <Filters>
            <RefreshButton>Обновить</RefreshButton>
            <GroupTitle $top={19}>Даты</GroupTitle>
            <DateInput readOnly value="05/18/2019 - 05/25/2019" />
            <GroupTitle $top={2}>Категории</GroupTitle>
            <CheckList>
              {CATEGORIES.map(([label, on]) => (
                <CheckRow key={label}>
                  <Box>
                    {on && (
                      <svg width="11" height="11" viewBox="0 0 11 11">
                        <path d="M1 5.500L4 8.500L10 2" fill="none" stroke="#333" strokeWidth="1.200" />
                      </svg>
                    )}
                  </Box>
                  <span>{label}</span>
                </CheckRow>
              ))}
            </CheckList>
          </Filters>
        </Column>

        <Column $gutter={12}>
          <Title>Карта</Title>
          <MapFrame>
            <CityMap />
            <ZoomControl>
              <ZoomButton>
                <svg width="12" height="12" viewBox="0 0 12 12"><path d="M0 6h12M6 0v12" stroke="#000" strokeWidth="2" /></svg>
              </ZoomButton>
              <ZoomButton>
                <svg width="12" height="12" viewBox="0 0 12 12"><path d="M0 5h12" stroke="#000" strokeWidth="2" /></svg>
              </ZoomButton>
            </ZoomControl>
          </MapFrame>
        </Column>

        <Column>
          <Title $align="left">Мероприятия</Title>
          <ListArea>
            <Cards>
              {EVENTS.map(([name, h]) => (
                <Card key={name} $h={h}>
                  <EventButton>{name}</EventButton>
                  <EventLink>Ссылка</EventLink>
                </Card>
              ))}
            </Cards>
            <Scrollbar>
              <ScrollArrow>
                <svg width="8" height="7" viewBox="0 0 8 7"><path d="M.8 5.500L4 2l3.200 3.500" fill="none" stroke="#505050" strokeWidth="2" /></svg>
              </ScrollArrow>
              <ScrollThumb />
            </Scrollbar>
          </ListArea>
        </Column>
      </Columns>

      <Caret width="9" height="17" viewBox="0 0 9 17">
        <path d="M1 1.500h2.500l1 1 1-1H8M4.500 2v13M1 15.500h2.500l1-1 1 1H8" fill="none" stroke="#222" />
      </Caret>
    </Screen>
  );
}
